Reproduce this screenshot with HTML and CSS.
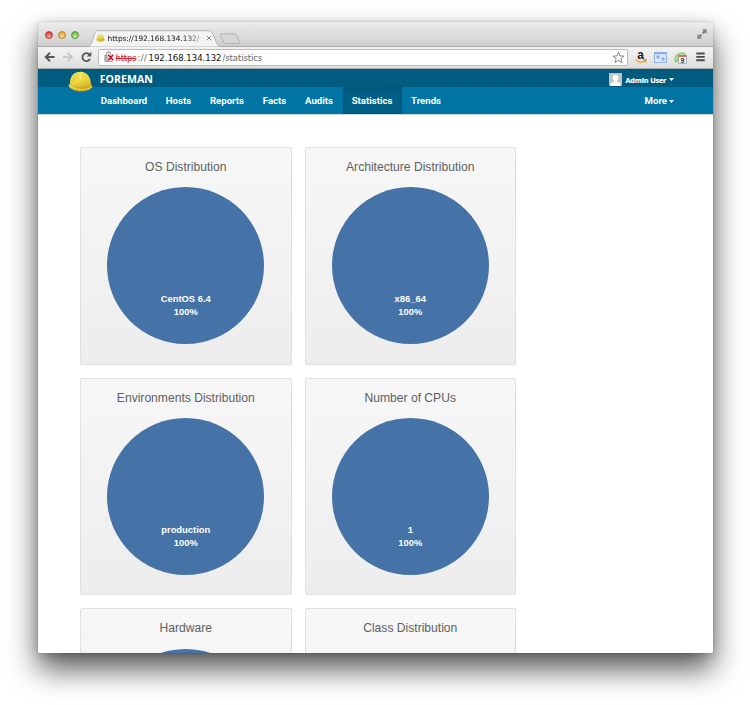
FILE: index.html
```
<!DOCTYPE html>
<html lang="en">
<head>
<meta charset="utf-8">
<title>Foreman - Statistics</title>
<link rel="stylesheet" href="styles.css">
</head>
<body>
<svg class="defs" width="0" height="0" aria-hidden="true">
  <defs>
    <linearGradient id="gold" x1="0" y1="0" x2=".3" y2="1"><stop offset="0" stop-color="#f2e267"/><stop offset=".6" stop-color="#ecd53a"/><stop offset="1" stop-color="#c9a51e"/></linearGradient>
    <symbol id="helmet" viewBox="0 0 25 21">
      <path d="M2 12.500C2 5 6 .8 12.500.8S22.500 6 23 13L24.700 15.500C24 18 18.500 20.700 12 20.500 6 20.300 1 17 .5 14.500Z" fill="url(#gold)"/>
      <path d="M2 12.500C6 17 17 18.500 23 13.500" fill="none" stroke="#c3a126" stroke-width=".8" opacity=".6"/>
      <path d="M1.500 15C6 19 18 20 23.500 16" fill="none" stroke="#f5e568" stroke-width="1" opacity=".8"/>
      <path d="M8.500 2.500C6.500 5 5.500 8 5.500 11M16.500 2.500C18 5 18.500 8 18.500 11" fill="none" stroke="#c8ad2c" stroke-width=".8" opacity=".5"/>
      <path d="M12.500 2V9" stroke="#faf09a" stroke-width="2" opacity=".5"/>
    </symbol>
  </defs>
</svg>
<div class="window">
  <div class="tabstrip">
    <div class="lights"><i class="light red"></i><i class="light amber"></i><i class="light green"></i></div>
    <div class="tab">
      <svg class="tab-shape" width="135" height="17" viewBox="0 0 135 17"><path d="M0 17C3 16 3.500 13 5 9 6.500 4 7 .7 10.500.7H120.500C124 .7 125 4 127 9 128.500 13 129.500 16 133 17Z" fill="#f3f3f3" stroke="#a9a9a9" stroke-width=".8"/></svg>
      <div class="tab-content">
        <svg width="9" height="8"><use href="#helmet"/></svg>
        <span class="tab-title">https://192.168.134.132/</span>
        <svg class="close" width="6" height="6" viewBox="0 0 6 6"><path d="M.8.8 5.200 5.200M5.200.8.8 5.200" stroke="#888" stroke-width="1"/></svg>
      </div>
    </div>
    <svg class="newtab" width="22" height="12" viewBox="0 0 22 12"><path d="M2 .8H15.500Q17 .8 18 3L20.500 9Q21 10.700 19.500 10.700H7Q5.300 10.700 4.500 9L1.500 2.500Q1 .8 2 .8Z" fill="#d6d6d6" stroke="#aaa" stroke-width=".8"/></svg>
    <svg class="expand" width="10" height="10" viewBox="0 0 10 10" fill="#858585"><path d="M5 .3H9.700V5L8.200 3.500 6.500 5.200 4.800 3.500 6.500 1.800ZM.3 5 1.800 6.500 3.500 4.800 5.200 6.500 3.500 8.200 5 9.700H.3Z"/></svg>
  </div>
  <div class="toolbar">
    <svg class="nav-icons" width="50" height="12" viewBox="0 0 50 12" fill="none">
      <path d="M10.500 6H1.700M6 1.800 1.700 6 6 10.200" stroke="#555" stroke-width="1.900"/>
      <path d="M19 6H27.800M23.500 1.800 27.800 6 23.500 10.200" stroke="#c0c0c0" stroke-width="1.700"/>
      <path d="M45.500 3.500A4 4 0 1 0 46 8" stroke="#555" stroke-width="1.800"/><path d="M47.300.8V5.400H42.700Z" fill="#555"/>
    </svg>
    <div class="omnibox">
      <svg class="lock" width="11" height="12" viewBox="0 0 11 12"><path d="M2.300 5V3.400Q2.300 1 4.500 1T6.700 3.400V5" fill="none" stroke="#aaa" stroke-width="1.300"/><rect x=".8" y="4.500" width="7.300" height="6" fill="#b5b5b5" stroke="#8d8d8d" stroke-width=".6"/><path d="M4.200 3.800 9.200 9.300M9.200 3.800 4.200 9.300" stroke="#fff" stroke-width="3"/><path d="M4.200 3.800 9.200 9.300M9.200 3.800 4.200 9.300" stroke="#d5101c" stroke-width="1.700"/></svg>
      <span class="url"><s>https</s><span class="slashes">://</span><b>192.168.134.132</b><span class="path">/statistics</span></span>
      <svg class="star" width="13" height="13" viewBox="0 0 13 13"><path d="M6.500 1 8 4.900 12 5.100 8.900 7.600 10 11.600 6.500 9.400 3 11.600 4.100 7.600 1 5.100 5 4.900Z" fill="#fff" stroke="#777" stroke-width=".9"/></svg>
    </div>
    <div class="extensions">
      <span class="amazon">a<svg width="12" height="5" viewBox="0 0 12 5"><path d="M.8.8Q5.500 5.300 10.300 1.500M8 1.100 11 .8 10.300 3.500" fill="none" stroke="#f1a02d" stroke-width="1.500"/></svg></span>
      <svg width="13" height="11" viewBox="0 0 13 11"><rect x=".5" y=".5" width="12" height="10" fill="#dce9fa" stroke="#8fb4e4"/><path d="M.5 1.500H12.500" stroke="#88b1e6" stroke-width="1.500"/><g fill="none" stroke="#639be5"><circle cx="4" cy="5" r="1.200"/><circle cx="9" cy="7" r="1.200"/></g></svg>
      <svg width="14" height="13" viewBox="0 0 14 13"><path d="M.5 10.500Q-.5 4.500 4 2.500T11 2L12 5 6 7 3 11.500Z" fill="#8bcf7a"/><path d="M1.500 9Q3 4 9 3" fill="none" stroke="#d5f2cb" stroke-width=".8"/><rect x="4.500" y="4.500" width="8" height="8" fill="#f0f0f0" stroke="#999" stroke-width=".7"/><path d="M4.500 5H12.500" stroke="#dc6b6b" stroke-width="1.800"/><text x="8.500" y="11.700" class="day">9</text></svg>
      <svg width="9" height="10" viewBox="0 0 9 10"><path d="M.3 1.500H8.700M.3 4.900H8.700M.3 8.300H8.700" stroke="#4b4b4b" stroke-width="1.900"/></svg>
    </div>
  </div>
  <header class="masthead">
    <svg class="logo" width="25" height="21"><use href="#helmet"/></svg>
    <strong class="brand">FOREMAN</strong>
    <div class="user"><svg width="13" height="13" viewBox="0 0 13 13"><rect width="13" height="13" rx="1" fill="#c4c4c4"/><circle cx="6.500" cy="4.800" r="3" fill="#fff"/><path d="M1.500 13V11.500Q2 9.300 5 8.700V7H8V8.700Q11 9.300 11.500 11.500V13Z" fill="#fff"/></svg><span>Admin User</span><svg class="caret" width="5" height="3" viewBox="0 0 5 3"><path d="M0 0H5L2.500 3Z" fill="#fff"/></svg></div>
  </header>
  <nav class="menu">
    <a class="w-dashboard">Dashboard</a><a class="w-hosts">Hosts</a><a class="w-reports">Reports</a><a class="w-facts">Facts</a><a class="w-audits">Audits</a><a class="w-statistics active">Statistics</a><a class="w-trends">Trends</a>
    <a class="more">More<svg width="5" height="3" viewBox="0 0 5 3"><path d="M0 0H5L2.500 3Z" fill="#fff"/></svg></a>
  </nav>
  <main class="charts">
    <section class="card"><h2>OS Distribution</h2><div class="pie"><span>CentOS 6.4<br>100%</span></div></section>
    <section class="card"><h2>Architecture Distribution</h2><div class="pie"><span>x86_64<br>100%</span></div></section>
    <section class="card"><h2>Environments Distribution</h2><div class="pie"><span>production<br>100%</span></div></section>
    <section class="card"><h2>Number of CPUs</h2><div class="pie"><span>1<br>100%</span></div></section>
    <section class="card"><h2>Hardware</h2><div class="pie"></div></section>
    <section class="card"><h2>Class Distribution</h2></section>
  </main>
</div>
</body>
</html>
```
FILE: styles.css
```
* { box-sizing: border-box; }
body { margin: 0; height: 705px; padding: 22px 37px 0 37.5px; overflow: hidden; background: #fff; font-family: "Liberation Sans", sans-serif; }
svg { display: block; flex: none; }
.defs { position: absolute; }
.window { width: 675.500px; height: 631px; overflow: hidden; background: #fff; border-radius: 4px 4px 1px 1px; box-shadow: 0 0 1px rgba(0,0,0,.5), 0 2px 10px rgba(0,0,0,.15), 0 16px 30px rgba(0,0,0,.66); }

.tabstrip { display: flex; height: 24.500px; background: linear-gradient(#ececec, #cfcfcf); border-bottom: 1px solid #aaa; }
.lights { display: flex; gap: 5px; padding: 9px 0 0 7.600px; width: 50px; }
.light { width: 8px; height: 8px; border-radius: 50%; border: 1px solid; }
.red { background: radial-gradient(circle at 50% 75%, #ffb0a8, #e5403f 65%); border-color: #b8423e; }
.amber { background: radial-gradient(circle at 50% 75%, #ffe59b, #ebaa3d 65%); border-color: #b98031; }
.green { background: radial-gradient(circle at 50% 75%, #c8f6a8, #76be51 65%); border-color: #5b9a45; }
.tab { display: grid; width: 131px; height: 17px; margin-top: 7.500px; }
.tab-shape, .tab-content { grid-area: 1 / 1; }
.tab-content { display: flex; align-items: center; padding-left: 8.500px; height: 17px; }
.tab-title { width: 93px; margin: 1px 0 0 2.500px; font: 7.400px/10px "DejaVu Sans", sans-serif; letter-spacing: -.03px; white-space: nowrap; color: #111; -webkit-mask-image: linear-gradient(90deg, #000 80%, rgba(0,0,0,.35)); }
.close { margin-left: 5px; }
.newtab { margin: 10.500px 0 0 0; }
.expand { margin: 7px 6.500px 0 auto; }

.toolbar { display: flex; align-items: center; height: 22.500px; padding-left: 6px; background: linear-gradient(#f3f3f3, #dedede); border-bottom: 1px solid #aaa; }
.omnibox { display: flex; align-items: center; width: 530.500px; height: 17px; margin-left: 4px; padding-left: 5px; background: #fff; border: 1px solid #bbb; border-radius: 2px; }
.url { display: flex; margin: 1px 0 0 1px; font: 8.500px/12px "DejaVu Sans", sans-serif; white-space: nowrap; color: #666; }
.url s { width: 22px; letter-spacing: -.2px; color: #c9222b; text-decoration-thickness: 1px; }
.url b { width: 74px; font-weight: 400; color: #111; }
.slashes { width: 11px; letter-spacing: .4px; }
.path { letter-spacing: -.1px; }
.star { margin: 0 2px 0 auto; }
.extensions { display: flex; align-items: center; margin-left: 6.500px; gap: 7.700px; }
.extensions > :first-child { margin-right: -.5px; }
.amazon { width: 12px; height: 13px; font: 700 12px/8px "Liberation Sans", sans-serif; text-align: center; color: #222; }
.day { font: 700 7px "Liberation Sans", sans-serif; fill: #333; text-anchor: middle; }

.masthead { display: flex; align-items: center; height: 18px; padding-left: 30.300px; background: #005c7e; color: #fff; }
.logo { position: relative; z-index: 1; margin-top: 7px; }
.brand { margin-left: 7px; padding-top: 2px; font: 700 10.600px/13px "Open Sans", sans-serif; }
.user { display: flex; align-items: center; margin: 2px 39px 0 auto; font: 700 7.200px/10px "Open Sans", sans-serif; }
.user span { margin: 1px 4.500px 0 3.500px; width: 39px; white-space: nowrap; letter-spacing: -.12px; -webkit-text-stroke: .2px #fff; }
.caret { margin-top: 1px; }

.menu { display: flex; height: 27.500px; padding-left: 54px; background: #0074a2; border-bottom: 1px solid #ccd7dc; color: #fff; font: 700 9.600px/28px Roboto, sans-serif; }
.menu a { display: flex; justify-content: center; height: 26.500px; white-space: nowrap; }
.menu .active { background: #005f84; box-shadow: inset 0 2px 5px rgba(0,0,0,.14); }
.w-dashboard { width: 65px; }
.w-hosts { width: 44px; }
.w-reports { width: 53px; }
.w-facts { width: 42px; }
.w-audits { width: 47px; }
.w-statistics { width: 59px; }
.w-trends { width: 49px; }
.menu .more { margin: 0 39px 0 auto; gap: 2px; }
.more svg { margin-top: 12.500px; }

.charts { display: grid; grid-template-columns: 211.500px 211.500px; grid-auto-rows: 217.700px; gap: 13px; padding: 32.500px 0 0 42.500px; }
.card { display: flex; flex-direction: column; align-items: center; border: 1px solid #e0e0e0; border-radius: 2px; background: linear-gradient(#f7f7f7, #ededed); }
.card h2 { margin: 12px 0 12.300px; font-size: 12.100px; line-height: 15px; font-weight: 400; color: #606060; }
.pie { display: flex; justify-content: center; width: 157px; height: 157px; border-radius: 50%; background: #4572a7; }
.pie span { margin-top: 105px; font-size: 9.400px; line-height: 13px; font-weight: 700; text-align: center; color: #fff; }
```
